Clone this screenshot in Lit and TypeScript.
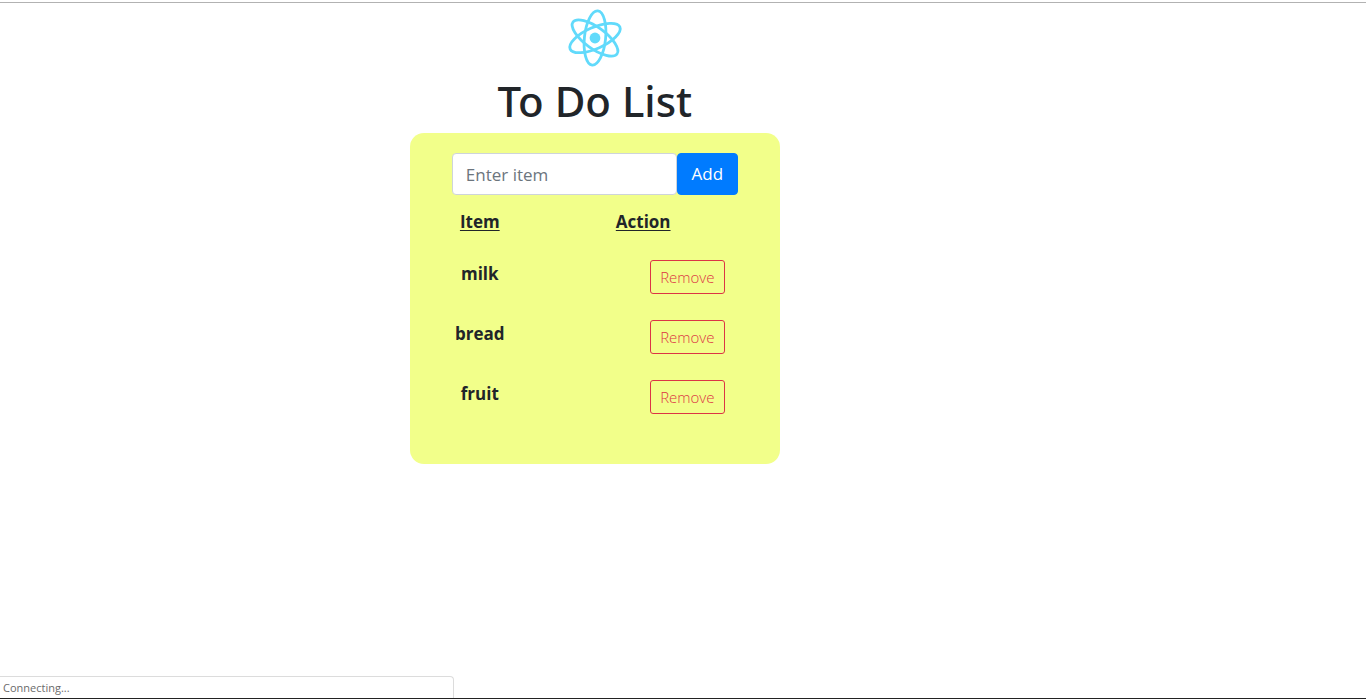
import { LitElement, html, css } from "lit";
import { customElement, state } from "lit/decorators.js";

@customElement("app-root")
export class AppRoot extends LitElement {
  @state() private items = ["milk", "bread", "fruit"];

  static styles = css`
    :host {
      display: flex;
      flex-direction: column;
      min-height: 100vh;
      box-sizing: border-box;
      padding-top: 2px;
      background: #fff;
      color: #212529;
      font-family: "Open Sans", "Noto Sans", sans-serif;
      font-size: 17px;
      line-height: 26px;
    }
    * {
      box-sizing: border-box;
    }
    .page {
      flex: 1;
      border-top: 1px solid #b2b2b2;
    }
    .column {
      width: 370px;
      margin-left: 30%;
    }
    .logo {
      display: block;
      width: 66px;
      height: 66px;
      margin: 2px auto 4px;
    }
    h1 {
      margin: 0 0 6px;
      font-family: "Noto Sans", "Open Sans", sans-serif;
      font-size: 42px;
      line-height: 52px;
      font-weight: 500;
      text-align: center;
    }
    .card {
      background: #f2ff8a;
      border-radius: 14px;
      padding: 20px 42px 31px;
    }
    form {
      display: flex;
      height: 42px;
    }
    .field {
      flex: 1;
      min-width: 0;
      padding: 6px 13px 4px;
      border: 1px solid #ced4da;
      border-radius: 4px;
      background: #fff;
      color: #495057;
      font: inherit;
      outline: none;
    }
    .field::placeholder {
      color: #6c757d;
      opacity: 1;
    }
    .add {
      width: 61px;
      padding: 0;
      border: 1px solid #007bff;
      border-radius: 4px;
      background: #007bff;
      color: #fff;
      font: inherit;
    }
    table {
      width: 100%;
      margin-top: 8px;
      border-collapse: collapse;
      table-layout: fixed;
    }
    th {
      padding: 0;
      font-weight: 700;
      vertical-align: top;
    }
    thead th {
      height: 50px;
      padding-top: 6px;
      text-decoration: underline;
      text-underline-offset: 2px;
    }
    .name {
      width: 56px;
    }
    .action-head {
      text-align: left;
      padding-left: 108px;
    }
    tbody th {
      height: 60px;
      padding-top: 8px;
    }
    td {
      padding: 7px 13px 0 0;
      text-align: right;
      vertical-align: top;
    }
    .remove {
      display: block;
      width: 75px;
      height: 34px;
      margin-left: auto;
      padding: 0;
      border: 1px solid #dc3545;
      border-radius: 3px;
      background: transparent;
      color: #dc3545;
      font: inherit;
      font-size: 15px;
      font-weight: 300;
    }
    .status {
      width: 454px;
      max-width: 100%;
      height: 22px;
      padding-left: 3px;
      border: 1px solid #dcdcdc;
      border-width: 1px 1px 0 0;
      border-top-right-radius: 4px;
      color: #6b6b6b;
      font-size: 11px;
      line-height: 22px;
    }
    .edge {
      height: 1px;
      background: #222;
    }
  `;

  private add(e: Event) {
    e.preventDefault();
    const field = this.renderRoot.querySelector<HTMLInputElement>("#item")!;
    const text = field.value.trim();
    if (text) this.items = [...this.items, text];
    field.value = "";
  }

  private remove(index: number) {
    this.items = this.items.filter((_, i) => i !== index);
  }

  render() {
    return html`
      <div class="page">
        <main class="column">
          <svg class="logo" viewBox="-33 -33 66 66" aria-hidden="true">
            <g fill="none" stroke="#61dafb" stroke-width="2.8" transform="rotate(6)">
              <ellipse rx="10.6" ry="27.2" />
              <ellipse rx="10.6" ry="27.2" transform="rotate(60)" />
              <ellipse rx="10.6" ry="27.2" transform="rotate(120)" />
            </g>
            <circle r="5.4" fill="#61dafb" />
          </svg>
          <h1>To Do List</h1>
          <section class="card">
            <form @submit=${this.add}>
              <input id="item" class="field" type="text" placeholder="Enter item" aria-label="Enter item" />
              <button class="add" type="submit">Add</button>
            </form>
            <table>
              <thead>
                <tr>
                  <th class="name" scope="col">Item</th>
                  <th class="action-head" scope="col">Action</th>
                </tr>
              </thead>
              <tbody>
                ${this.items.map(
                  (item, i) => html`
                    <tr>
                      <th scope="row">${item}</th>
                      <td>
                        <button class="remove" type="button" @click=${() => this.remove(i)}>Remove</button>
                      </td>
                    </tr>
                  `
                )}
              </tbody>
            </table>
          </section>
        </main>
      </div>
      <div class="status" role="status">Connecting...</div>
      <div class="edge"></div>
    `;
  }
}
